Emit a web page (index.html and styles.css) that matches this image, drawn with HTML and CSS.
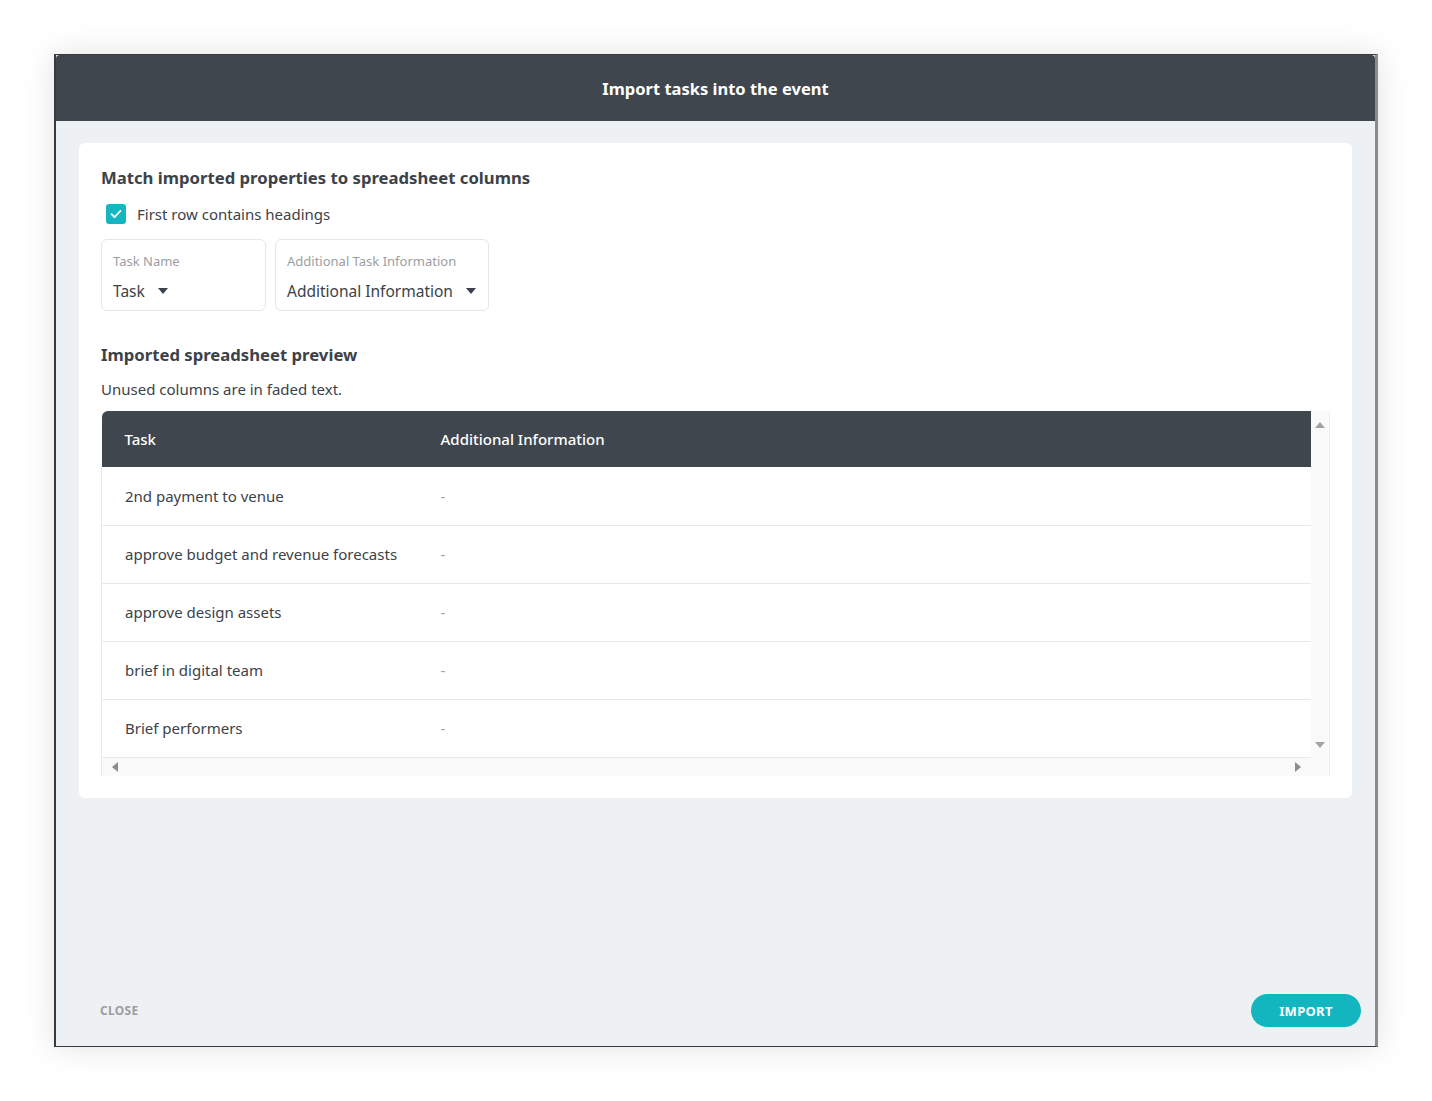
FILE: index.html
```html
<!DOCTYPE html>
<html lang="en">
<head>
    <meta charset="UTF-8">
    <title>Import tasks into the event</title>
    <link rel="stylesheet" href="styles.css">
</head>
<body>
    <div class="dialog">
        <!-- Header -->
        <header class="dialog-header">
            <h1 class="dialog-title">Import tasks into the event</h1>
        </header>

        <div class="dialog-body">
            <div class="card">
                <h2 class="section-title">Match imported properties to spreadsheet columns</h2>

                <label class="check-row">
                    <span class="checkbox">
                        <svg width="14" height="14" viewBox="0 0 14 14"><path d="M2.5 7.2l3 3 6-6.4" fill="none" stroke="#fff" stroke-width="1.8" stroke-linecap="round" stroke-linejoin="round"/></svg>
                    </span>
                    First row contains headings
                </label>

                <div class="fields">
                    <div class="field field-task">
                        <div class="field-label">Task Name</div>
                        <div class="field-value">Task <span class="caret"></span></div>
                    </div>
                    <div class="field field-info">
                        <div class="field-label">Additional Task Information</div>
                        <div class="field-value">Additional Information <span class="caret"></span></div>
                    </div>
                </div>

                <h2 class="section-title preview-title">Imported spreadsheet preview</h2>
                <p class="hint">Unused columns are in faded text.</p>

                <!-- Preview table -->
                <div class="preview">
                    <div class="preview-main">
                        <table class="preview-table">
                            <thead>
                                <tr><th class="col-task">Task</th><th>Additional Information</th></tr>
                            </thead>
                            <tbody>
                                <tr><td>2nd payment to venue</td><td class="empty">-</td></tr>
                                <tr><td>approve budget and revenue forecasts</td><td class="empty">-</td></tr>
                                <tr><td>approve design assets</td><td class="empty">-</td></tr>
                                <tr><td>brief in digital team</td><td class="empty">-</td></tr>
                                <tr><td>Brief performers</td><td class="empty">-</td></tr>
                            </tbody>
                        </table>
                        <div class="hscroll">
                            <span class="arrow arrow-left"></span>
                            <span class="arrow arrow-right"></span>
                        </div>
                    </div>
                    <div class="vscroll">
                        <span class="arrow arrow-up"></span>
                        <span class="arrow arrow-down"></span>
                    </div>
                </div>
            </div>
        </div>

        <footer class="dialog-footer">
            <button class="btn-close">CLOSE</button>
            <button class="btn-import">IMPORT</button>
        </footer>
    </div>
</body>
</html>
```

FILE: styles.css
```css
* {
    margin: 0;
    padding: 0;
    box-sizing: border-box;
}

body {
    font-family: "Noto Sans", "Open Sans", sans-serif;
    background-color: #fff;
    padding: 54px;
    color: #3c4249;
}

.dialog {
    width: 1324px;
    height: 993px;
    display: flex;
    flex-direction: column;
    background-color: #eef1f4;
    border: 1px solid #3a3a3a;
    border-left-width: 2px;
    border-right: 3px solid #8a8d90;
    box-shadow: 0 0 30px rgba(0,0,0,0.12);
}

.dialog-header {
    height: 66px;
    background-color: #40464e;
    display: flex;
    align-items: center;
    justify-content: center;
    border-radius: 4px 4px 0 0;
}

.dialog-title {
    color: #fff;
    font-size: 16.5px;
    font-weight: 700;
}

.dialog-body {
    flex-grow: 1;
    padding: 22px 23px 0 23px;
}

.card {
    background-color: #fff;
    border-radius: 6px;
    padding: 23px 22px 22px 22px;
}

.section-title {
    font-size: 16.7px;
    font-weight: 700;
    color: #3c4249;
}

.check-row {
    display: flex;
    align-items: center;
    gap: 11px;
    margin-top: 15px;
    margin-left: 5px;
    font-size: 15px;
}

.checkbox {
    width: 20px;
    height: 20px;
    border-radius: 3px;
    background-color: #16b6c1;
    display: flex;
    align-items: center;
    justify-content: center;
}

.fields {
    display: flex;
    gap: 9px;
    margin-top: 15px;
}

.field {
    border: 1px solid #e4e6e8;
    border-radius: 6px;
    height: 72px;
    padding: 12px 11px 0 11px;
}

.field-task {
    width: 165px;
}

.field-info {
    width: 214px;
}

.field-label {
    font-size: 13px;
    color: #9a9ea3;
}

.field-value {
    margin-top: 10px;
    font-size: 15.5px;
    display: flex;
    align-items: center;
}

.caret {
    display: inline-block;
    margin-left: 13px;
    width: 0;
    height: 0;
    border-left: 5px solid transparent;
    border-right: 5px solid transparent;
    border-top: 6px solid #3c4249;
}

.preview-title {
    margin-top: 32px;
}

.hint {
    font-size: 15px;
    margin-top: 13px;
}

.preview {
    display: flex;
    margin-top: 12px;
}

.preview-main {
    flex: 1 1 0;
    min-width: 0;
}

.preview-table {
    width: 100%;
    border-collapse: collapse;
    table-layout: fixed;
    font-size: 15px;
    white-space: nowrap;
}

.preview-table th {
    background-color: #40464e;
    color: #fff;
    font-weight: 500;
    text-align: left;
    height: 56px;
    padding: 0 23px;
}

.preview-table th:first-child {
    border-top-left-radius: 6px;
}

.preview-table .col-task {
    width: 316px;
}

.preview-table td {
    height: 58px;
    padding: 0 23px;
    border-bottom: 1px solid #e8e9ea;
}

.preview-table tbody tr td:first-child {
    border-left: 1px solid #e8e9ea;
    padding-right: 0;
}

.preview-table td.empty {
    color: #a0a4a8;
}

.hscroll,
.vscroll {
    background-color: #fafafa;
    position: relative;
}

.hscroll {
    height: 18px;
    border-left: 1px solid #e8e9ea;
}

.vscroll {
    flex: 0 0 19px;
    border-right: 1px solid #eeeeee;
}

.arrow {
    position: absolute;
    width: 0;
    height: 0;
}

.arrow-left {
    left: 10px;
    top: 4px;
    border-top: 5px solid transparent;
    border-bottom: 5px solid transparent;
    border-right: 6px solid #8d8d8d;
}

.arrow-right {
    right: 10px;
    top: 4px;
    border-top: 5px solid transparent;
    border-bottom: 5px solid transparent;
    border-left: 6px solid #8d8d8d;
}

.arrow-up {
    top: 11px;
    left: 4px;
    border-left: 5px solid transparent;
    border-right: 5px solid transparent;
    border-bottom: 6px solid #a3a3a3;
}

.arrow-down {
    top: 331px;
    left: 4px;
    border-left: 5px solid transparent;
    border-right: 5px solid transparent;
    border-top: 6px solid #a3a3a3;
}

.dialog-footer {
    display: flex;
    justify-content: space-between;
    align-items: center;
    padding: 0 14px 19px 44px;
}

.btn-close {
    background: none;
    border: none;
    font-family: inherit;
    font-size: 12px;
    font-weight: 700;
    color: #9a9ea3;
    letter-spacing: 0.3px;
}

.btn-import {
    width: 110px;
    height: 33px;
    border: none;
    border-radius: 17px;
    background-color: #13b6bf;
    color: #fff;
    font-family: inherit;
    font-size: 13px;
    font-weight: 700;
    letter-spacing: 0.3px;
}
```
